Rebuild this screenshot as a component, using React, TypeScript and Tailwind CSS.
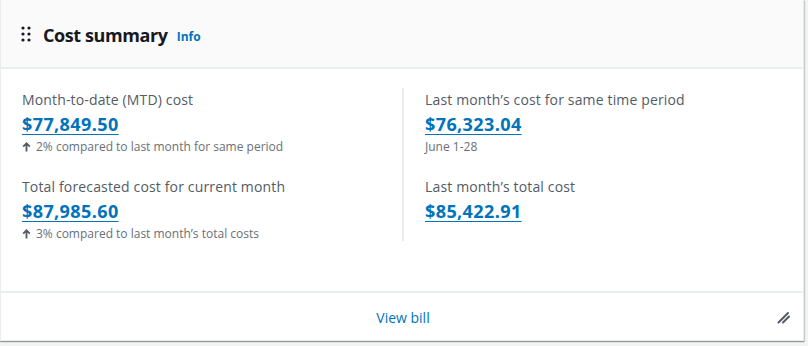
import React from "react";

const font = { fontFamily: '"Open Sans", "Noto Sans", Arial, sans-serif' };

function Metric({ label, value, sub, arrow }: { label: string; value: string; sub?: string; arrow?: boolean }) {
  return (
    <div className="flex flex-col">
      <div className="text-[14px] leading-[22px] text-[#545b64] tracking-[0.15px]">{label}</div>
      <a className="mt-[1px] text-[18px] leading-[24px] font-bold text-[#0073bb] tracking-[0.4px] underline underline-offset-[3px] decoration-[1px]">{value}</a>
      {sub && (
        <div className="mt-[3px] flex items-center gap-[5px] text-[12px] leading-[16px] text-[#687078]">
          {arrow && (
            <svg width="9" height="10" viewBox="0 0 9 10">
              <path d="M4.5 9.5V1.5M1.2 4.6L4.5 1.3 7.8 4.6" fill="none" stroke="#545b64" strokeWidth="1.8" />
            </svg>
          )}
          <span>{sub}</span>
        </div>
      )}
    </div>
  );
}

export default function App() {
  return (
    <div className="w-[808px] h-[346px] bg-[#f2f3f3]" style={font}>
      <div className="w-[804px] h-[341px] bg-white border border-[#eaeded] border-t-0 shadow-[0_1px_1px_0_rgba(0,28,36,0.3),1px_1px_1px_0_rgba(0,28,36,0.15)] flex flex-col">
        <div className="h-[69px] shrink-0 bg-[#fafafa] border-b-[2px] border-[#eaeded] flex items-center pl-[20px]">
          <svg width="10" height="16" viewBox="0 0 10 16" className="mt-[1px]">
            {[2, 8].map((x) =>
              [2, 8, 14].map((y) => <circle key={`${x}-${y}`} cx={x} cy={y} r="1.6" fill="#16191f" />)
            )}
          </svg>
          <span className="ml-[12px] mt-[2px] text-[18px] font-bold text-[#16191f] leading-[24px] tracking-[-0.4px]">Cost summary</span>
          <span className="ml-[9px] mt-[6px] text-[12px] leading-[16px] font-bold text-[#0073bb]">Info</span>
        </div>
        <div className="h-[222px] shrink-0 flex pt-[20px] pl-[21px]">
          <div className="w-[380px] flex flex-col gap-[21px]">
            <Metric label="Month-to-date (MTD) cost" value="$77,849.50" sub="2% compared to last month for same period" arrow />
            <Metric label="Total forecasted cost for current month" value="$87,985.60" sub="3% compared to last month’s total costs" arrow />
          </div>
          <div className="w-[2px] h-[153px] -mt-[1px] bg-[#eaeded]" />
          <div className="pl-[21px] flex flex-col gap-[21px]">
            <Metric label="Last month’s cost for same time period" value="$76,323.04" sub="June 1-28" />
            <Metric label="Last month’s total cost" value="$85,422.91" />
          </div>
        </div>
        <div className="flex-1 border-t-[2px] border-[#eaeded] flex items-center justify-center relative">
          <a className="text-[14px] text-[#0073bb] ml-[2px] mt-[1px]">View bill</a>
          <svg width="14" height="14" viewBox="0 0 14 14" className="absolute right-[12px] top-[17px]">
            <path d="M1.5 12.5L11 3M6 12.5L12 6.5" fill="none" stroke="#545b64" strokeWidth="2" strokeLinecap="round" />
          </svg>
        </div>
      </div>
    </div>
  );
}
